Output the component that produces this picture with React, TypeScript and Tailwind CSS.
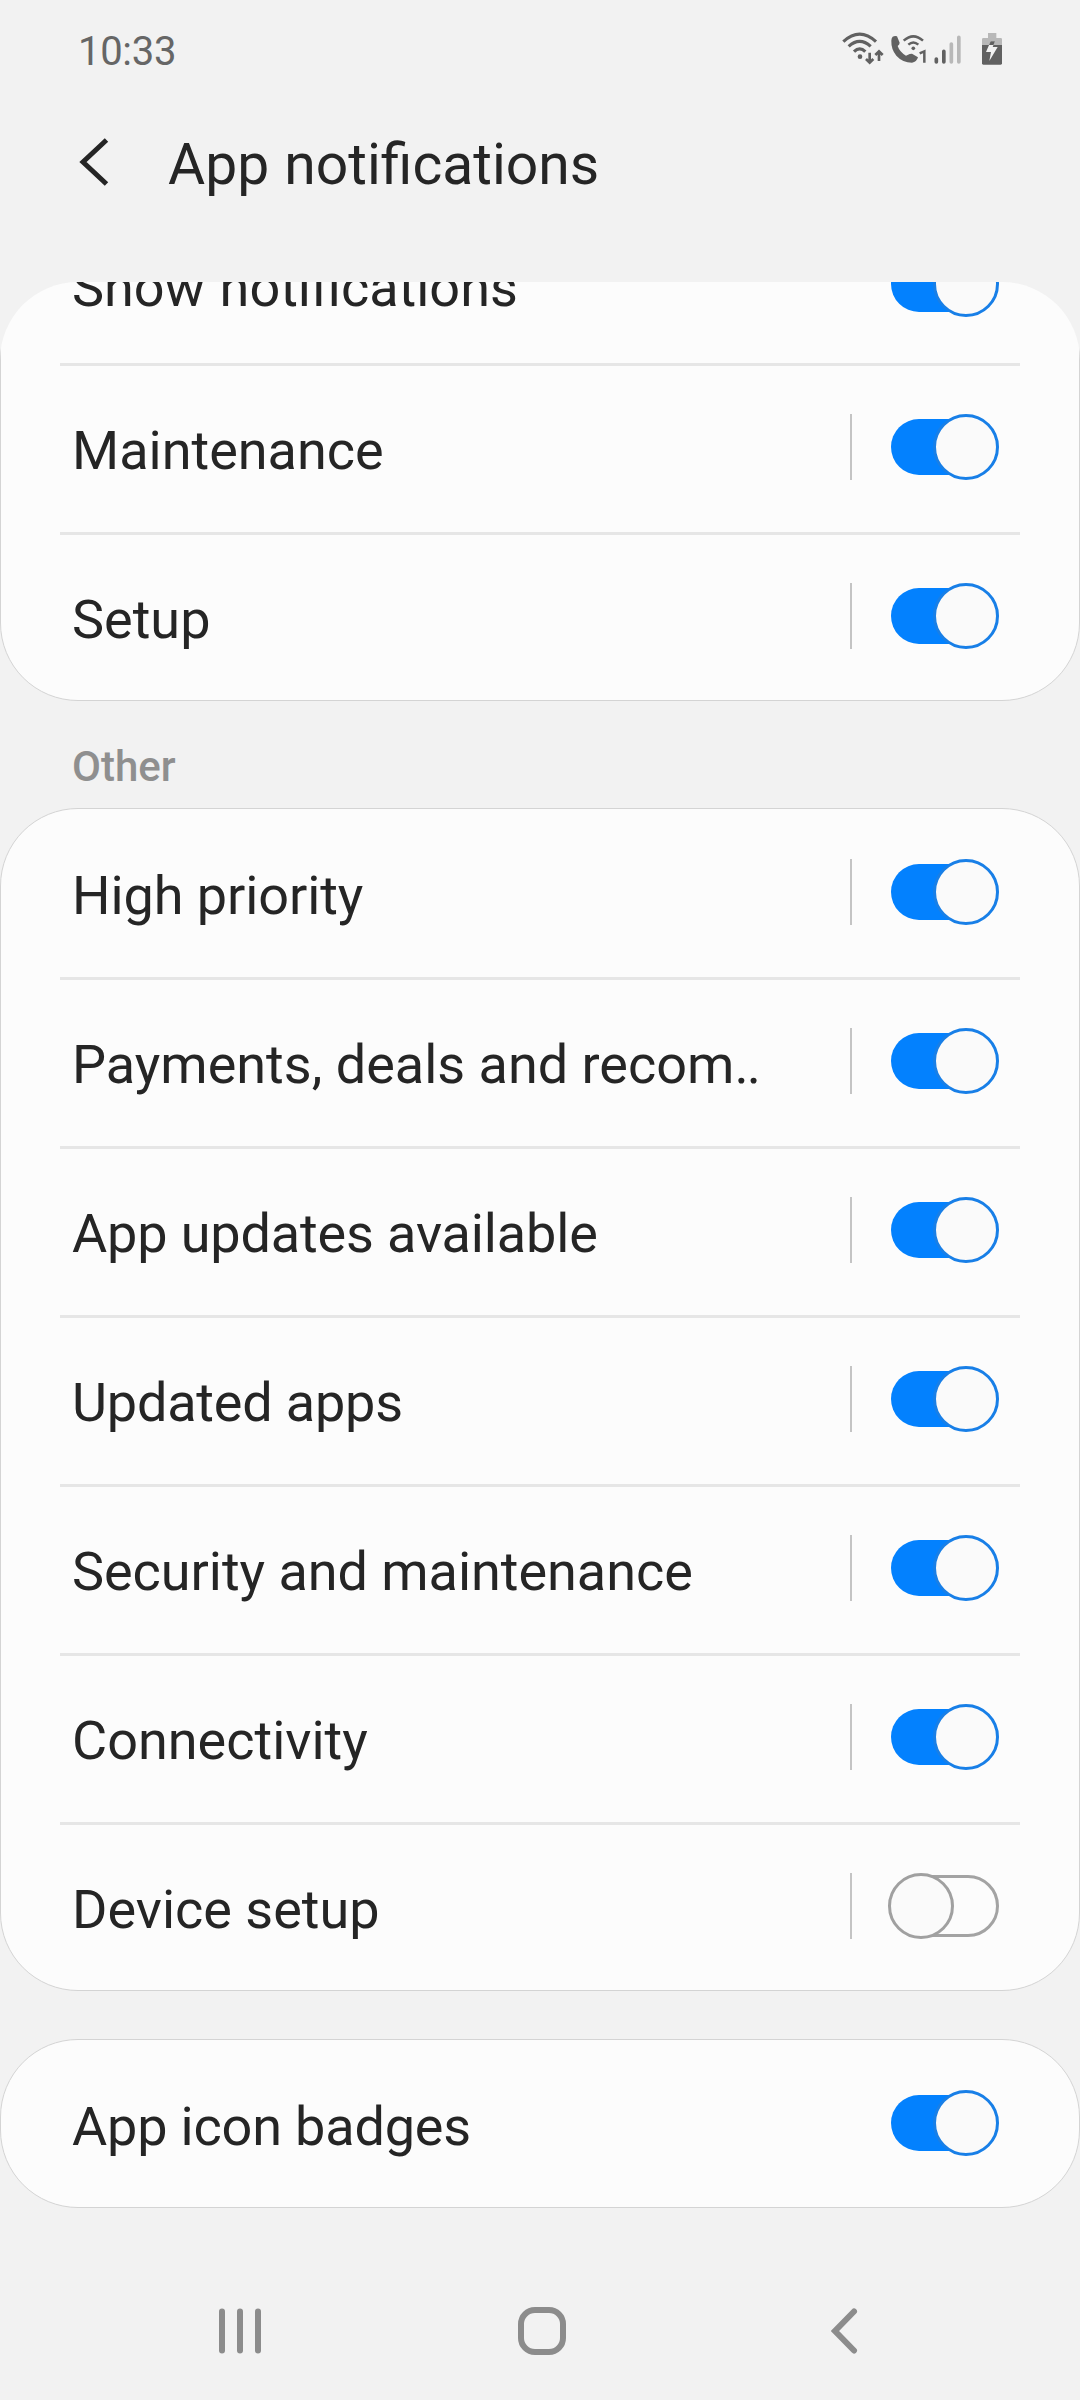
type Item = { label: string; on: boolean; split?: boolean; lowered?: boolean; truncated?: boolean; spacing?: string };

const general: Item[] = [
  { label: "Show notifications", on: true, lowered: true, spacing: "[word-spacing:1px]" },
  { label: "Maintenance", on: true, split: true },
  { label: "Setup", on: true, split: true },
];

const other: Item[] = [
  { label: "High priority", on: true, split: true, spacing: "tracking-[-0.08px]" },
  { label: "Payments, deals and recom", on: true, split: true, truncated: true },
  { label: "App updates available", on: true, split: true, spacing: "tracking-[-0.14px]" },
  { label: "Updated apps", on: true, split: true, spacing: "tracking-[-0.2px]" },
  { label: "Security and maintenance", on: true, split: true, spacing: "tracking-[-0.04px]" },
  { label: "Connectivity", on: true, split: true },
  { label: "Device setup", on: false, split: true },
];

const badges: Item[] = [{ label: "App icon badges", on: true, spacing: "tracking-[-0.18px]" }];

function Toggle({ on }: { on: boolean }) {
  return on ? (
    <button role="switch" aria-checked="true" className="relative flex h-[66px] w-[111px] items-center justify-end">
      <span className="h-14 w-[105px] mr-[3px] rounded-full bg-[#0381fe]" />
      <span className="absolute right-0 top-0 size-[66px] rounded-full border-3 border-[#187fe7] bg-[#fafafa]" />
    </button>
  ) : (
    <button role="switch" aria-checked="false" className="relative flex h-[66px] w-[111px] items-center justify-end">
      <span className="h-[62px] w-[108px] rounded-full border-3 border-[#a3a3a3]" />
      <span className="absolute left-0 top-0 size-[66px] rounded-full border-3 border-[#a0a0a0] bg-[#fafafa]" />
    </button>
  );
}

function Row({ item, first }: { item: Item; first: boolean }) {
  return (
    <li>
      <div className={first ? "mx-[59px] h-[3px]" : "mx-[59px] h-[3px] bg-[#e6e6e6]"} />
      <div className={`flex h-[166px] items-start pl-[71px] pr-20 ${item.lowered ? "pt-[54px]" : "pt-12"}`}>
        <span className={`mt-[4px] flex-1 whitespace-nowrap text-[54px] leading-[66px] text-[#252525] ${item.spacing ?? ""}`}>
          {item.label}
          {item.truncated && <span className="tracking-[-2px]">..</span>}
        </span>
        {item.split && <span className="mr-9 h-[66px] w-[2px] bg-[#c4c4c4]" />}
        <Toggle on={item.on} />
      </div>
    </li>
  );
}

function Card({ items }: { items: Item[] }) {
  return (
    <ul className="rounded-[78px] border border-[#d4d4d4] bg-[#fcfcfc]">
      <div className="-my-px">
        {items.map((item, i) => (
          <Row key={item.label} item={item} first={i === 0} />
        ))}
      </div>
    </ul>
  );
}

function StatusIcons() {
  return (
    <svg className="h-20 w-[220px]" viewBox="0 0 660 240" fill="none" aria-hidden="true">
      <g stroke="#616161" strokeWidth="9.5">
        <path d="M70 95Q119 50 168 95" />
        <path d="M86 109Q119 79 152 109" />
        <path d="M102 125Q119 108 136 125" />
      </g>
      <circle cx="120" cy="140" r="7" fill="#616161" />
      <g stroke="#616161" strokeWidth="8">
        <path d="M149 128V157M138 147l11 11 11-11" />
        <path d="M177 153V125M166 135l11-11 11 11" />
      </g>
      <path
        d="M218 80Q225 76 231 79L239 98Q239 103 233 108Q239 126 258 137L269 132L276 131L294 142Q290 156 276 158Q248 158 229 137Q213 117 214 92Q214 84 218 80Z"
        fill="#616161"
      />
      <g stroke="#616161" strokeWidth="7.5">
        <path d="M251 92Q280 66 309 92" />
        <path d="M265 104Q280 91 295 104" />
      </g>
      <circle cx="280" cy="115" r="5.5" fill="#616161" />
      <path d="M299 130L313 124V158" stroke="#616161" strokeWidth="7.5" />
      <g strokeWidth="11" strokeLinecap="round">
        <path d="M349 147V156M371.500 124V156" stroke="#616161" />
        <path d="M394 102V156M416.500 82V156" stroke="#b8b8b8" />
      </g>
      <path d="M504 69H529V84H542Q546 84 546 88V105H486V88Q486 84 490 84H504Z" fill="#b8b8b8" />
      <path d="M486 105H546V160Q546 164 542 164H490Q486 164 486 160Z" fill="#616161" />
      <path d="M512 94H525L518 111H533L508 153L513 126H498Z" fill="#f2f2f2" />
      <path d="M512 94H525L520.500 105H507Z" fill="#616161" />
    </svg>
  );
}

export default function App() {
  return (
    <div className="flex h-[2400px] w-[1080px] flex-col overflow-hidden bg-[#f2f2f2] font-[Roboto,sans-serif]">
      <div className="flex h-[100px] items-start justify-between pl-[78px] pr-10 pt-[10px]">
        <span className="mt-[18px] text-[40px] leading-[48px] tracking-[-0.3px] text-[#666666]">10:33</span>
        <StatusIcons />
      </div>

      <header className="flex h-[182px] items-start pl-[78px] pt-[30px]">
        <svg className="mt-2 h-12 w-8" viewBox="0 0 32 48" fill="none" aria-hidden="true">
          <path d="M28.500 2L5 24L28.500 46" stroke="#252525" strokeWidth="5" />
        </svg>
        <h1 className="ml-[58px] mt-px text-[57px] leading-[68px] text-[#252525] [word-spacing:1px]">App notifications</h1>
      </header>

      <main className="h-[1978px] overflow-hidden rounded-t-[78px]">
        <div className="-mt-[88px]">
          <Card items={general} />
          <h2 className="flex h-[107px] items-start pl-[72px] pt-[41px] text-[42px] font-medium leading-[50px] text-[#8f8f8f]">
            Other
          </h2>
          <Card items={other} />
          <div className="h-12" />
          <Card items={badges} />
        </div>
      </main>

      <nav className="flex h-[140px] items-start pl-[219px] pt-[47px]">
        <svg className="h-12 w-[42px]" viewBox="0 0 42 48" aria-hidden="true">
          <g fill="#8c8c8c">
            <rect x="0" y="1.500" width="6" height="45" rx="3" />
            <rect x="18" y="1.500" width="6" height="45" rx="3" />
            <rect x="36" y="1.500" width="6" height="45" rx="3" />
          </g>
        </svg>
        <svg className="ml-[257px] size-12" viewBox="0 0 48 48" fill="none" aria-hidden="true">
          <rect x="3" y="3" width="42" height="42" rx="14" stroke="#8c8c8c" strokeWidth="6" />
        </svg>
        <svg className="ml-[265px] h-12 w-7" viewBox="0 0 28 48" fill="none" aria-hidden="true">
          <path d="M23 4.500L4 24L23 43.500" stroke="#8c8c8c" strokeWidth="6" strokeLinecap="round" />
        </svg>
      </nav>
    </div>
  );
}
